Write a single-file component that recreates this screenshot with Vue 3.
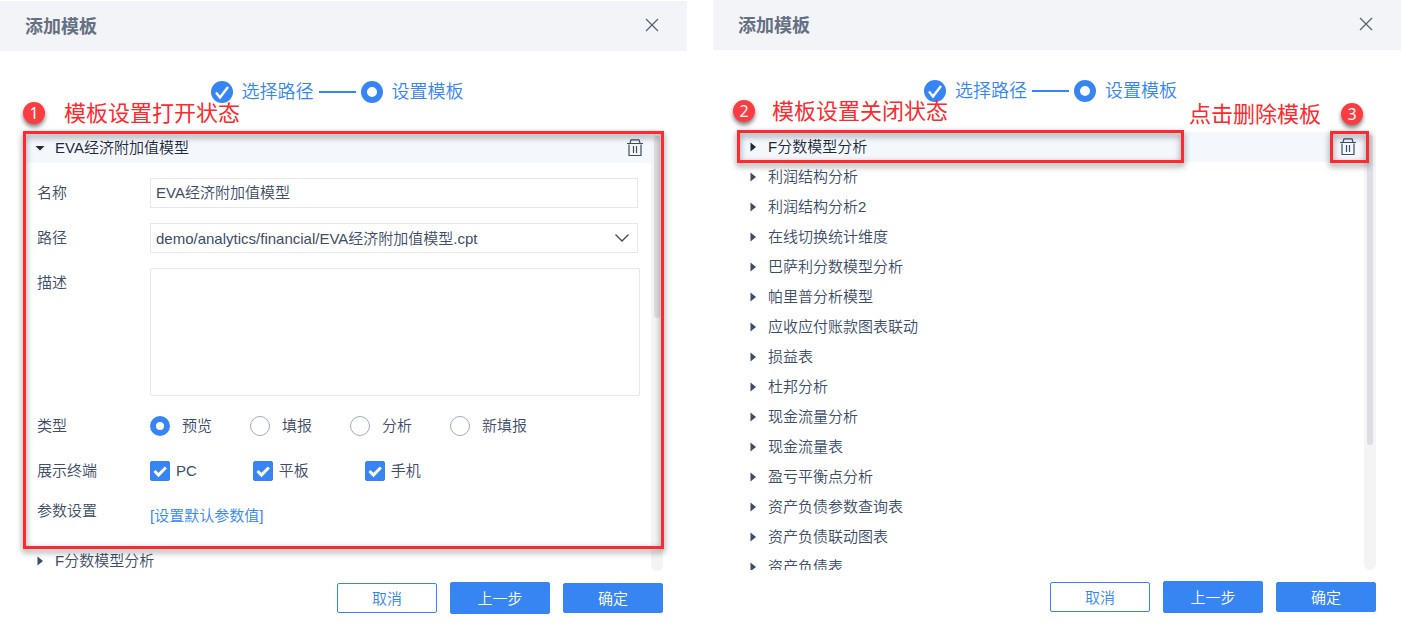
<script setup>
import { ref } from 'vue'

const name = ref('EVA经济附加值模型')
const path = ref('demo/analytics/financial/EVA经济附加值模型.cpt')
const desc = ref('')
const type = ref('预览')
const types = ['预览', '填报', '分析', '新填报']
const devices = ref([
  { label: 'PC', on: true },
  { label: '平板', on: true },
  { label: '手机', on: true }
])
const templates = [
  'F分数模型分析',
  '利润结构分析',
  '利润结构分析2',
  '在线切换统计维度',
  '巴萨利分数模型分析',
  '帕里普分析模型',
  '应收应付账款图表联动',
  '损益表',
  '杜邦分析',
  '现金流量分析',
  '现金流量表',
  '盈亏平衡点分析',
  '资产负债参数查询表',
  '资产负债联动图表',
  '资产负债表'
]
const dialogs = ['open', 'closed']
</script>

<template>
  <main class="page">
    <section v-for="mode in dialogs" :key="mode" class="dialog" :class="mode">
      <header class="head">
        <h2>添加模板</h2>
        <button type="button" class="icon-btn" aria-label="关闭">
          <svg width="14" height="14" viewBox="0 0 14 14" fill="none" stroke="#55606e" stroke-width="1.2">
            <path d="M1 1L13 13M13 1L1 13" />
          </svg>
        </button>
      </header>

      <div class="steps">
        <svg width="22" height="22" viewBox="0 0 22 22">
          <circle cx="11" cy="11" r="11" fill="#3685f2" />
          <path d="M5 11.500L9 16.500L17 6" fill="none" stroke="#fff" stroke-width="2.4" />
        </svg>
        <span class="step-text">选择路径</span>
        <i class="line"></i>
        <svg width="22" height="22" viewBox="0 0 22 22">
          <circle cx="11" cy="11" r="8" fill="#fff" stroke="#3685f2" stroke-width="6" />
        </svg>
        <span class="step-text last">设置模板</span>
      </div>

      <div class="body">
        <div class="list">
          <template v-if="mode === 'open'">
            <div class="row active">
              <svg class="caret" width="10" height="10" viewBox="0 0 10 10"><path d="M0.500 3H9.500L5 7.500Z" fill="currentColor" /></svg>
              <span>EVA经济附加值模型</span>
              <button type="button" class="icon-btn trash" aria-label="删除模板">
                <svg width="16" height="18" viewBox="0 0 16 18" fill="none" stroke="#3d4d66" stroke-width="1.2">
                  <path d="M3 4L4 0.800H12L13 4M0 4.500H16M2 5.500V16.500H14V5.500M6.500 7V14M9.500 7V14" />
                </svg>
              </button>
            </div>
            <form class="form" @submit.prevent>
              <label class="lab" for="f-name">名称</label>
              <input id="f-name" v-model="name" class="field" type="text" />
              <label class="lab" for="f-path">路径</label>
              <div class="select">
                <select id="f-path" v-model="path" class="field">
                  <option>{{ path }}</option>
                </select>
                <svg width="16" height="10" viewBox="0 0 16 10" fill="none" stroke="#3d4d66" stroke-width="1.3">
                  <path d="M1.500 1.500L8 8L14.500 1.500" />
                </svg>
              </div>
              <label class="lab" for="f-desc">描述</label>
              <textarea id="f-desc" v-model="desc" class="area"></textarea>
              <span class="lab">类型</span>
              <div class="radios">
                <label v-for="t in types" :key="t">
                  <input v-model="type" type="radio" name="type" :value="t" />
                  <span>{{ t }}</span>
                </label>
              </div>
              <span class="lab">展示终端</span>
              <div class="checks">
                <label v-for="d in devices" :key="d.label">
                  <span class="tick">
                    <input v-model="d.on" type="checkbox" />
                    <svg v-if="d.on" width="20" height="20" viewBox="0 0 20 20" fill="none" stroke="#fff" stroke-width="3">
                      <path d="M4.500 10L8.500 14L15.800 6.500" />
                    </svg>
                  </span>
                  <span>{{ d.label }}</span>
                </label>
              </div>
              <span class="lab short">参数设置</span>
              <a href="#" class="link">[设置默认参数值]</a>
            </form>
            <div class="row">
              <svg class="caret" width="10" height="10" viewBox="0 0 10 10"><path d="M2.500 0.500V9.500L8 5Z" fill="currentColor" /></svg>
              <span>F分数模型分析</span>
            </div>
          </template>
          <template v-else>
            <div v-for="(t, i) in templates" :key="t" class="row" :class="{ active: i === 0 }">
              <svg class="caret" width="10" height="10" viewBox="0 0 10 10"><path d="M2.500 0.500V9.500L8 5Z" fill="currentColor" /></svg>
              <span>{{ t }}</span>
              <button v-if="i === 0" type="button" class="icon-btn trash" aria-label="删除模板">
                <svg width="16" height="18" viewBox="0 0 16 18" fill="none" stroke="#3d4d66" stroke-width="1.2">
                  <path d="M3 4L4 0.800H12L13 4M0 4.500H16M2 5.500V16.500H14V5.500M6.500 7V14M9.500 7V14" />
                </svg>
              </button>
            </div>
          </template>
        </div>
        <div class="track"><div class="thumb"></div></div>
      </div>

      <footer class="foot">
        <button type="button" class="btn ghost">取消</button>
        <button type="button" class="btn tall">上一步</button>
        <button type="button" class="btn">确定</button>
      </footer>

      <template v-if="mode === 'open'">
        <div class="mark mark1"></div>
        <div class="note note1"><b>1</b><span>模板设置打开状态</span></div>
      </template>
      <template v-else>
        <div class="mark mark2"></div>
        <div class="mark mark3"></div>
        <div class="note note2"><b>2</b><span>模板设置关闭状态</span></div>
        <div class="note note3"><span>点击删除模板</span><b>3</b></div>
      </template>
    </section>
  </main>
</template>

<style>
body {
  margin: 0;
  background: #fff;
}
</style>

<style scoped>
.page {
  display: grid;
  grid-template-columns: 687fr 688fr;
  gap: 26px;
  height: 100vh;
  box-sizing: border-box;
  font-family: "Liberation Sans", "Noto Sans CJK SC", sans-serif;
  font-size: 15px;
  font-weight: 350;
  color: #3d4d66;
}
.page * {
  box-sizing: border-box;
}
button,
input,
select,
textarea {
  font: inherit;
  color: inherit;
  margin: 0;
}
.dialog {
  position: relative;
  display: flex;
  flex-direction: column;
  min-width: 0;
  min-height: 0;
}
.open {
  margin-top: 1px;
}
.closed {
  margin-bottom: 1px;
}
.head {
  display: flex;
  align-items: center;
  justify-content: space-between;
  flex: none;
  height: 50px;
  padding: 0 28px 2px 25px;
  background: #f2f4f8;
}
.head h2 {
  margin: 0;
  font-size: 18px;
  font-weight: 700;
  color: #657083;
}
.icon-btn {
  display: flex;
  padding: 0;
  border: 0;
  background: none;
}
.steps {
  display: flex;
  align-items: center;
  justify-content: center;
  flex: none;
  height: 82px;
  margin: 0 38px 0 25px;
  font-size: 18px;
  line-height: 24px;
  color: #3685f2;
}
.step-text {
  margin: 0 5px 0 9px;
}
.step-text.last {
  margin-right: 0;
}
.line {
  width: 37px;
  height: 2px;
  margin-right: 5px;
  background: #3685f2;
}
.body {
  display: flex;
  flex: 1;
  min-height: 0;
  margin: 0 24px 0 25px;
}
.closed .body {
  margin-right: 25px;
}
.list {
  flex: 1;
  min-width: 0;
  overflow: hidden;
}
.row {
  display: flex;
  align-items: center;
  height: 30px;
  padding: 0 8px 0 10px;
  line-height: 30px;
}
.row.active {
  background: #f4f8fd;
  color: #1c2a3d;
}
.caret {
  flex: none;
  margin-right: 10px;
}
.trash {
  margin-left: auto;
}
.form {
  display: grid;
  grid-template-columns: 113px 1fr;
  row-gap: 15px;
  padding: 15px 11px 15px 12px;
  line-height: 30px;
}
.short {
  line-height: 20px;
}
.field {
  display: block;
  width: 100%;
  height: 30px;
  padding: 0 5px;
  border: 1px solid #e6e8ec;
  border-radius: 0;
  background: #fff;
  appearance: none;
  outline: 0;
}
input.field,
.select {
  width: calc(100% - 2px);
}
.select {
  position: relative;
}
.select svg {
  position: absolute;
  right: 8px;
  top: 10px;
  pointer-events: none;
}
.area {
  display: block;
  width: 100%;
  height: 128px;
  border: 1px solid #e6e8ec;
  border-radius: 2px;
  resize: none;
}
.radios,
.checks {
  display: flex;
}
.radios label {
  display: flex;
  align-items: center;
  gap: 12px;
  min-width: 100px;
}
.radios input {
  width: 20px;
  height: 20px;
  border: 1px solid #a3abb8;
  border-radius: 50%;
  appearance: none;
}
.radios input:checked {
  border: 6px solid #3685f2;
}
.checks {
  gap: 56px;
}
.checks label {
  display: flex;
  align-items: center;
  gap: 6px;
}
.tick {
  position: relative;
  width: 20px;
  height: 20px;
}
.tick input {
  display: block;
  width: 20px;
  height: 20px;
  border: 1px solid #a3abb8;
  border-radius: 2px;
  appearance: none;
}
.tick input:checked {
  border-color: #3685f2;
  background: #3685f2;
}
.tick svg {
  position: absolute;
  inset: 0;
  pointer-events: none;
}
.link {
  justify-self: start;
  color: #3685f2;
  text-decoration: none;
}
.track {
  flex: none;
  width: 12px;
  padding: 3px;
  border-radius: 6px;
  background: #f4f4f4;
}
.thumb {
  height: 310px;
  border-radius: 3px;
  background: #dddee3;
}
.open .thumb {
  height: 182px;
}
.foot {
  display: flex;
  align-items: center;
  justify-content: flex-end;
  gap: 13px;
  flex: none;
  padding: 11px 24px;
}
.closed .foot {
  padding-right: 25px;
}
.btn {
  width: 100px;
  height: 30px;
  padding: 0 0 2px;
  border: 1px solid #3685f2;
  border-radius: 2px;
  background: #3685f2;
  color: #fff;
}
.tall {
  height: 32px;
}
.ghost {
  background: #fff;
  color: #3685f2;
}
.mark {
  position: absolute;
  border: 3px solid #fe2a2f;
  filter: drop-shadow(0 3px 3px rgba(0, 0, 0, 0.5));
  pointer-events: none;
}
.mark1 {
  top: 130px;
  left: 23px;
  right: 23px;
  height: 418px;
}
.mark2 {
  top: 130px;
  left: 24px;
  right: 217px;
  height: 33px;
}
.mark3 {
  top: 131px;
  right: 32px;
  width: 39px;
  height: 32px;
}
.note {
  position: absolute;
  display: flex;
  align-items: center;
  font-size: 22px;
  font-weight: 400;
  line-height: 30px;
  white-space: nowrap;
  color: #fe2a2f;
}
.note span {
  padding-top: 2px;
}
.note b {
  width: 22px;
  height: 22px;
  border-radius: 50%;
  background: #fb3c40;
  box-shadow: 0 3px 4px rgba(0, 0, 0, 0.5);
  color: #fff;
  font-family: "Noto Sans", sans-serif;
  font-size: 16px;
  font-weight: 400;
  line-height: 22px;
  text-align: center;
}
.note1 {
  top: 96px;
  left: 23px;
  gap: 19px;
}
.note2 {
  top: 95px;
  left: 20px;
  gap: 17px;
}
.note3 {
  top: 98px;
  right: 38px;
  gap: 20px;
}
</style>
